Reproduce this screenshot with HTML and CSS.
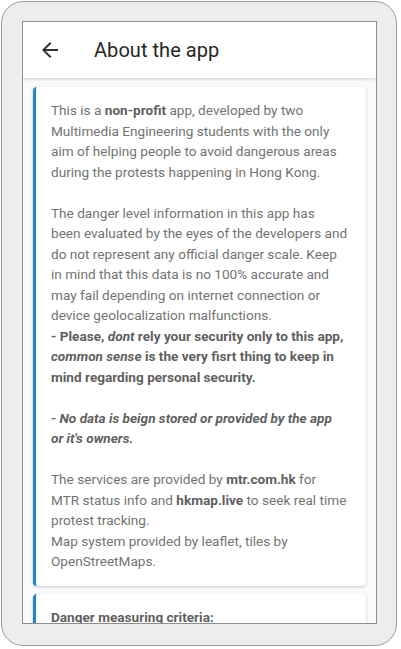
FILE: index.html
```html
<!DOCTYPE html>
<html>
<head>
<meta charset="utf-8">
<link rel="stylesheet" href="styles.css">
</head>
<body>
<div class="frame">
  <div class="screen">
    <header class="appbar">
      <svg class="back" width="24" height="24" viewBox="0 0 24 24"><path d="M20 11H7.83l5.59-5.59L12 4l-8 8 8 8 1.41-1.41L7.83 13H20v-2z" fill="#333"/></svg>
      <h1 class="title">About the app</h1>
    </header>
    <main class="content">
      <section class="card">
        <p>This is a <b>non-profit</b> app, developed by two<br>Multimedia Engineering students with the only<br>aim of helping people to avoid dangerous areas<br>during the protests happening in Hong Kong.</p>
        <p>The danger level information in this app has<br>been evaluated by the eyes of the developers and<br>do not represent any official danger scale. Keep<br>in mind that this data is no 100% accurate and<br>may fail depending on internet connection or<br>device geolocalization malfunctions.<br>
        <b>- Please, <i>dont</i> rely your security only to this app,<br><i>common sense</i> is the very fisrt thing to keep in<br>mind regarding personal security.</b></p>
        <p><b><i>- No data is beign stored or provided by the app<br>or it's owners.</i></b></p>
        <p>The services are provided by <b>mtr.com.hk</b> for<br>MTR status info and <b>hkmap.live</b> to seek real time<br>protest tracking.<br>
        Map system provided by leaflet, tiles by<br>OpenStreetMaps.</p>
      </section>
      <section class="card">
        <p><b>Danger measuring criteria:</b></p>
      </section>
    </main>
  </div>
</div>
</body>
</html>
```
FILE: styles.css
```css
html, body {
  margin: 0;
  padding: 0;
  background: #ffffff;
}
.frame {
  box-sizing: border-box;
  margin: 1px 0 0 1px;
  width: 396px;
  height: 645px;
  border: 1px solid #9c9c9c;
  border-radius: 22px;
  background: #ededed;
  padding: 19px 0 0 20px;
}
.screen {
  box-sizing: border-box;
  width: 355px;
  height: 603px;
  border: 1px solid #8e8e8e;
  background: #fafafa;
  overflow: hidden;
  display: flex;
  flex-direction: column;
}
.appbar {
  flex: 0 0 auto;
  height: 56px;
  background: #ffffff;
  display: flex;
  align-items: center;
  box-shadow: 0 1px 3px rgba(0,0,0,0.18);
  position: relative;
  z-index: 1;
}
.back {
  margin-left: 15px;
  display: block;
}
.title {
  margin: 0 0 0 32px;
  font-family: Roboto, "Liberation Sans", sans-serif;
  font-weight: 400;
  font-size: 20px;
  color: #262626;
  letter-spacing: 0.05px;
}
.content {
  padding: 9px 10px 0 10px;
  display: flex;
  flex-direction: column;
  gap: 8px;
}
.card {
  background: #ffffff;
  border-left: 3px solid #1f86d6;
  border-radius: 4px;
  box-shadow: 0 1px 3px rgba(0,0,0,0.2);
  padding: 13px 8px 4px 15px;
  font-family: Roboto, "Liberation Sans", sans-serif;
  font-size: 13.6px;
  line-height: 20.5px;
  color: #737373;
}
.card p {
  margin: 0 0 20.5px 0;
}
.card p:last-child {
  margin-bottom: 10px;
}
.card b {
  color: #5f5f5f;
  font-weight: 700;
}
```
